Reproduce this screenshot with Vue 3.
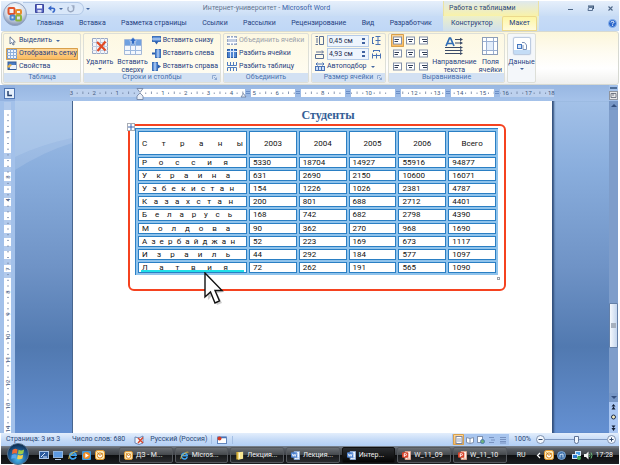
<script setup>
import { ref } from 'vue'

const tabs = ['Главная', 'Вставка', 'Разметка страницы', 'Ссылки', 'Рассылки', 'Рецензирование', 'Вид', 'Разработчик']
const years = ['2003', '2004', '2005', '2006', 'Всего']
const rows = [
  ['Россия', 5330, 18704, 14927, 55916, 94877],
  ['Украина', 631, 2690, 2150, 10600, 16071],
  ['Узбекистан', 154, 1226, 1026, 2381, 4787],
  ['Казахстан', 200, 801, 688, 2712, 4401],
  ['Беларусь', 168, 742, 682, 2798, 4390],
  ['Молдова', 90, 362, 270, 968, 1690],
  ['Азербайджан', 52, 223, 169, 673, 1117],
  ['Израиль', 44, 292, 184, 577, 1097],
  ['Латвия', 72, 262, 191, 565, 1090]
]
// Distributed text: every letter is a word, and one more gap follows the last.
const spread = (name) => name.split('').join(' ')
const trailing = (name) => Math.round(90 / name.length) + 3 + 'px'

const rowHeight = ref('0,45 см')
const colWidth = ref('4,93 см')
const zoom = ref(50)

const unit = 22.85
const hNumbers = [-3, -2, -1, 1, 2, 3, 4, 5, 6, 8, 10, 12, 13, 14, 15, 16, 17, 18]
const hMarks = [173, 223, 273, 323, 373, 422]
const hTicks = []
for (let i = -3; i < 18; i++) hTicks.push(i + 0.25, i + 0.5, i + 0.75)
const hx = (n) => 68 + n * unit

const vSegments = [[9, 43], [58, 8], [71, 9], [85, 7], [97, 8], [111, 8], [124, 8], [137, 8], [150, 8], [164, 7], [177, 400]]
const vNumbers = [[1, 31], [3, 76], [4, 99], [7, 168], [8, 191], [9, 213], [10, 236], [11, 259], [12, 282], [13, 305], [14, 328]]
const vTicks = []
for (let y = 14; y < 330; y += 5.7) vTicks.push(y)

const tasks = [
  { icon: 'i-mail', text: 'ДЗ - M...' },
  { icon: 'i-ie', text: 'Micros...' },
  { icon: 'i-folder', text: 'Лекция...' },
  { icon: 'i-word', text: 'Лекция...' },
  { icon: 'i-word', text: 'Интер...', active: true },
  { icon: 'i-ppt', text: 'W_11_09' },
  { icon: 'i-ppt', text: 'W_11_10' }
]
const aligns = [0, 1, 2, 3, 4, 5, 6, 7, 8]
</script>

<template>
  <div class="window">
    <svg class="defs" width="0" height="0" aria-hidden="true">
      <defs>
        <radialGradient id="orb" cx="50%" cy="30%" r="70%">
          <stop offset="0" stop-color="#fff" /><stop offset=".6" stop-color="#d5dce8" /><stop offset="1" stop-color="#7f8fae" />
        </radialGradient>
        <radialGradient id="start" cx="50%" cy="75%" r="75%">
          <stop offset="0" stop-color="#4cb8ea" /><stop offset=".55" stop-color="#1e5f9c" /><stop offset="1" stop-color="#0b2748" />
        </radialGradient>
        <symbol id="i-grid" viewBox="0 0 10 10">
          <rect x=".5" y=".5" width="9" height="9" fill="#eef4fc" stroke="#7f9cc8" />
          <path d="M0 3.5H10M0 6.5H10M3.5 0V10M6.5 0V10" stroke="#8fb0dc" />
        </symbol>
        <symbol id="i-mail" viewBox="0 0 10 10">
          <rect x=".5" y=".5" width="9" height="9" rx="2" fill="#fbe9b8" stroke="#e89a2a" />
          <circle cx="5" cy="5.5" r="2.6" fill="#fff" stroke="#d98417" /><path d="M2.5 2.5L5 5.5L7.5 3" fill="none" stroke="#c77812" />
        </symbol>
        <symbol id="i-ie" viewBox="0 0 10 10">
          <path d="M8 6.7A3.2 3.2 0 1 1 8.1 5.2H3" fill="none" stroke="#3fa2ec" stroke-width="1.7" />
          <path d="M.8 9Q0 6.5 4.5 3Q8.5 .2 9.4 1.4" fill="none" stroke="#f4c53c" stroke-width=".9" />
        </symbol>
        <symbol id="i-folder" viewBox="0 0 10 10">
          <path d="M1.5 1H5V9.5H1.5Z" fill="#d8b03a" /><path d="M3.5 1.5L9 .8V8.6L3.5 9.6Z" fill="#f8e691" /><path d="M5 2V8" stroke="#fffbe0" />
        </symbol>
        <symbol id="i-word" viewBox="0 0 10 10">
          <path d="M3.5 .5H9.5V9.5H3.5Z" fill="#f2f7ff" stroke="#8cabd8" /><path d="M5.5 7.5H8.5" stroke="#8cabd8" />
          <rect y="1.5" width="7" height="6" rx="1" fill="#4a80d0" /><path d="M1.3 3L2.4 6L3.5 3.6L4.6 6L5.7 3" fill="none" stroke="#fff" stroke-width=".9" />
        </symbol>
        <symbol id="i-ppt" viewBox="0 0 10 10">
          <path d="M3.5 .5H9.5V9.5H3.5Z" fill="#fff1ea" stroke="#e2a58c" /><path d="M5.5 8H8.5" stroke="#e2a58c" />
          <rect y="1.5" width="7" height="6" rx="1" fill="#d8432a" /><path d="M2.5 6.6V3H4A1 1 0 0 1 4 5H2.5" fill="none" stroke="#fff" />
        </symbol>
        <symbol id="i-launch" viewBox="0 0 5 5"><path d="M.5 4V.5H4M2 2L4.5 4.5M4.5 2.5V4.5H2.5" fill="none" stroke="#7d9bc8" stroke-width=".8" /></symbol>
      </defs>
    </svg>

    <header class="chrome">
      <button class="office" aria-label="Office">
        <svg viewBox="0 0 24 24">
          <circle cx="12" cy="12" r="11.5" fill="url(#orb)" stroke="#8fa3c4" />
          <g fill="none" stroke-width="2"><rect x="5.500" y="6" width="6" height="6" rx="1" stroke="#e0532a" /><rect x="13" y="8" width="5" height="4" rx="1" stroke="#e88a2a" /><rect x="13" y="13.500" width="5" height="5" rx="1" stroke="#8ab53c" /><rect x="7.500" y="13.500" width="4" height="4" rx="1" stroke="#4a86cf" /></g>
        </svg>
      </button>
      <div class="titlebar">
        <div class="quick">
          <button aria-label="Сохранить"><svg width="9" height="9" viewBox="0 0 9 9"><path d="M.5 .5H8.5V8.5H.5Z" fill="#5a68c4" stroke="#3d479c" /><rect x="2" y="1" width="5" height="3.5" fill="#f4f6ff" /><rect x="2.5" y="6" width="4" height="2.5" fill="#d5daf4" /></svg></button>
          <button aria-label="Отменить"><svg width="8" height="8" viewBox="0 0 8 8"><path d="M2 3.2H4.5Q7 3.2 6.4 5.5Q6 7 4.5 7.3" fill="none" stroke="#3767c8" stroke-width="1.6" /><path d="M0 3.2L3.3 .4V6Z" fill="#3767c8" /></svg></button>
          <i class="caret"></i>
          <button aria-label="Повторить"><svg width="8" height="8" viewBox="0 0 8 8"><path d="M1.6 2Q0 4 1.8 6Q4 7.5 6 5.8Q7.3 4 6 2" fill="none" stroke="#9aa8c0" stroke-width="1.4" /><path d="M4 .3H7.5V3.5Z" fill="#9aa8c0" /></svg></button>
        </div>
        <i class="caret more"></i>
        <h1>Интернет-университет - <span>Microsoft Word</span></h1>
        <div class="context">Работа с таблицами</div>
        <div class="controls">
          <button aria-label="Свернуть"><svg width="7" height="7" viewBox="0 0 7 7"><path d="M1 4.5H6" stroke="#4f6787" /></svg></button>
          <button aria-label="Восстановить"><svg width="7" height="7" viewBox="0 0 7 7"><path d="M1.5 2.5H5.5V5.5H1Z" fill="none" stroke="#5b7394" /><path d="M1 1.2H6.5V4" fill="none" stroke="#3f5878" stroke-width="1.2" /></svg></button>
          <button aria-label="Закрыть"><svg width="7" height="7" viewBox="0 0 7 7"><path d="M1.5 1.5L5.5 5.5M5.5 1.5L1.5 5.5" stroke="#4f6787" stroke-width="1.1" /></svg></button>
        </div>
      </div>
      <div class="tabbar">
        <nav class="tabs"><a v-for="t in tabs" :key="t" href="#">{{ t }}</a></nav>
        <nav class="tabs context-tabs"><a href="#">Конструктор</a><a href="#" class="active">Макет</a></nav>
        <div class="help"><button aria-label="Справка"><svg width="9" height="9" viewBox="0 0 9 9"><circle cx="4.5" cy="4.5" r="4" fill="#2b67cc" stroke="#8db4ea" /><path d="M3 3.5Q3.2 2.3 4.5 2.3Q6 2.4 5.9 3.4Q5.7 4.2 4.6 4.7V5.4M4.6 6.2V7" fill="none" stroke="#fff" /></svg></button></div>
      </div>
    </header>

    <section class="ribbon">
      <div class="group g-table">
        <div class="body stack">
          <button><svg width="10" height="10" viewBox="0 0 10 10"><path d="M3 .8V8L4.8 6.4L6 9L7.2 8.4L6.1 6H8.3Z" fill="#fff" stroke="#4a5f86" stroke-width=".8" /></svg>Выделить<i class="caret"></i></button>
          <button class="on"><svg width="10" height="10"><use href="#i-grid" /></svg>Отобразить сетку</button>
          <button><svg width="10" height="10" viewBox="0 0 10 10"><rect x="1" y="1" width="8" height="7.5" fill="#4a7cc4" stroke="#325a96" /><rect x="3" y="4" width="6" height="4" fill="#eef3fb" /><path d="M0 5.5L3 3L5 4L2 7Z" fill="#e9b44a" /></svg>Свойства</button>
        </div>
        <h2>Таблица</h2>
      </div>
      <div class="group g-rows">
        <div class="body">
          <button class="big"><svg width="18" height="18" viewBox="0 0 18 18"><path d="M1.5 1.5H16.500V16.500H1.500Z" fill="#f4f6fb" stroke="#9aa9c4" /><path d="M1 5.500H17M1 9.500H17M1 13.500H17M5.500 1V17M9.500 1V17M13.500 1V17" stroke="#c3cde0" /><path d="M6 5L14.500 13.500M14.500 4.500L6.500 14" stroke="#e04a26" stroke-width="2.200" /></svg><span>Удалить</span><i class="caret"></i></button>
          <button class="big"><svg width="18" height="18" viewBox="0 0 18 18"><path d="M.5 2.500H17.500V17.500H.5Z" fill="#f3f7fd" stroke="#a5b8d6" /><rect x="1" y="3" width="16" height="5" fill="#6fa0e0" /><path d="M0 8.500H18M0 13.500H18M6.500 3V17M11.500 3V17" stroke="#9cb8de" /><path d="M9 .5L12.500 4H10.500V7H7.500V4H5.500Z" fill="#2c68c4" stroke="#dfeafa" stroke-width=".5" /></svg><span>Вставить<br>сверху</span></button>
          <div class="stack">
            <button><svg width="9" height="9" viewBox="0 0 9 9"><rect x=".5" y=".5" width="8" height="5" fill="#5f92da" stroke="#3e70b8" /><path d="M0 3H9" stroke="#d5e4f8" /><path d="M2.500 5.500H6.500L4.500 8.500Z" fill="#2c5fae" /></svg>Вставить снизу</button>
            <button><svg width="9" height="9" viewBox="0 0 9 9"><rect x="3.500" y=".5" width="5" height="8" fill="#5f92da" stroke="#3e70b8" /><path d="M6 0V9" stroke="#d5e4f8" /><path d="M0 4.500H3" stroke="#2c5fae" stroke-width="2" /></svg>Вставить слева</button>
            <button><svg width="9" height="9" viewBox="0 0 9 9"><rect x=".5" y=".5" width="5" height="8" fill="#5f92da" stroke="#3e70b8" /><path d="M3 0V9" stroke="#d5e4f8" /><path d="M6 2.500L9 4.500L6 6.500Z" fill="#2c5fae" /></svg>Вставить справа</button>
          </div>
        </div>
        <h2>Строки и столбцы<svg class="launch"><use href="#i-launch" /></svg></h2>
      </div>
      <div class="group g-merge">
        <div class="body stack">
          <button class="off"><svg width="10" height="9" viewBox="0 0 10 9"><rect x=".5" y=".5" width="9" height="8" fill="#c4cfe2" stroke="#98a8c4" /><path d="M0 2.500H10M3.500 0V3M6.500 0V3M0 6.500H10M3.500 6V9M6.500 6V9" stroke="#fff" /></svg>Объединить ячейки</button>
          <button><svg width="10" height="9" viewBox="0 0 10 9"><rect x=".5" y=".5" width="9" height="8" fill="#4f84d0" stroke="#2f5fa8" /><path d="M0 2.500H10M3.500 0V9M6.500 0V9" stroke="#dce8fa" /></svg>Разбить ячейки</button>
          <button><svg width="10" height="9" viewBox="0 0 10 9"><path d="M.5 0V3.500H9.500V0M.5 9V5.500H9.500V9M3.500 0V3M6.500 0V3M3.500 6V9M6.500 6V9" fill="none" stroke="#4f7cc0" /></svg>Разбить таблицу</button>
        </div>
        <h2>Объединить</h2>
      </div>
      <div class="group g-size">
        <div class="body stack">
          <div class="field">
            <svg width="9" height="9" viewBox="0 0 9 9"><path d="M.5 .5H3M.5 8.500H3M4.500 .5H8.500V8.500H4.500ZM2 2V7" fill="none" stroke="#5a6f94" /></svg>
            <span class="spin"><input v-model="rowHeight" aria-label="Высота строки"><i class="steps"></i></span>
            <svg width="9" height="9" viewBox="0 0 9 9"><path d="M.5 1V8M3.500 .5H8.500M3.500 4.500H8.500M3.500 8.500H8.500M6 0V9M0 1.500H2M0 7.500H2" fill="none" stroke="#4a72b4" /></svg>
          </div>
          <div class="field">
            <svg width="9" height="9" viewBox="0 0 9 9"><path d="M.5 4.500H8.500V8.500H.5ZM1 2H8M7 .5L8.500 2L7 3.500" fill="none" stroke="#5a6f94" /></svg>
            <span class="spin"><input v-model="colWidth" aria-label="Ширина столбца"><i class="steps"></i></span>
            <svg width="9" height="9" viewBox="0 0 9 9"><path d="M1 .5H8M.5 3.500V8.500M4.500 3.500V8.500M8.500 3.500V8.500M0 5.500H9M1.500 0V2M7.500 0V2" fill="none" stroke="#4a72b4" /></svg>
          </div>
          <button class="fit"><svg width="10" height="9" viewBox="0 0 10 9"><rect x=".5" y="4.500" width="9" height="4" fill="#cfe0f8" stroke="#4a72b4" /><path d="M3.500 4V9M6.500 4V9M1 2H9M2.500 .5L1 2L2.500 3.500M7.500 .5L9 2L7.500 3.500" fill="none" stroke="#4a72b4" /></svg>Автоподбор<i class="caret"></i></button>
        </div>
        <h2>Размер ячейки<svg class="launch"><use href="#i-launch" /></svg></h2>
      </div>
      <div class="group g-align">
        <div class="body">
          <div class="aligns">
            <button v-for="a in aligns" :key="a" :class="{ on: a === 0 }" :aria-label="'Выравнивание ' + (a + 1)">
              <svg width="9" height="9" viewBox="0 0 9 9"><rect x=".5" y="1" width="8" height="7" fill="#fff" stroke="#8492ab" /><path :d="a % 3 === 2 ? 'M3 3.500H8M4 5.500H8' : a % 3 === 1 ? 'M2 3.500H7M3 5.500H6' : 'M1.500 3.500H6M1.500 5.500H5'" stroke="#333f58" /></svg>
            </button>
          </div>
          <button class="big"><svg width="20" height="18" viewBox="0 0 20 18"><path d="M2 9L5.500 1H6.500L10 9M3.500 6.500H8.500" fill="none" stroke="#2f6cb5" stroke-width="1.700" /><path d="M11 2.500H17M11 6H17M1 10.500H17M1 13.500H17M1 16.500H17" stroke="#3b4b68" /><path d="M16 .8L19 2.500L16 4.200ZM16 4.300L19 6L16 7.700ZM16 9L19 10.500L16 12ZM16 12L19 13.500L16 15ZM16 15L19 16.500L16 18Z" fill="#3b4b68" /></svg><span>Направление<br>текста</span></button>
          <button class="big"><svg width="16" height="18" viewBox="0 0 16 18"><rect x=".5" y=".5" width="15" height="17" fill="#fff" stroke="#8c9db8" /><path d="M4.500 1V17M11.500 1V17M1 4.500H15M1 13.500H15" stroke="#9bb0d2" /><rect x="5" y="5" width="6" height="8" fill="#e4eefb" /></svg><span>Поля<br>ячейки</span></button>
        </div>
        <h2>Выравнивание</h2>
      </div>
      <div class="group g-data">
        <button class="big data"><span class="tile"><svg width="10" height="8" viewBox="0 0 10 8"><rect x=".5" y="2.500" width="4" height="4" fill="#d5e4f8" stroke="#4477c0" /><path d="M5 .5H7.500L9.500 3V7.500H6V3" fill="#fff" stroke="#7d93b8" /></svg></span><span>Данные</span><i class="caret"></i></button>
      </div>
    </section>

    <main class="work">
      <div class="corner"><button aria-label="Табуляция"><svg width="9" height="9" viewBox="0 0 9 9"><path d="M3 2V6.500H7" fill="none" stroke="#26406e" stroke-width="1.500" /></svg></button></div>
      <div class="ruler-row">
        <svg class="hruler" width="480" height="16" viewBox="0 0 480 16">
          <rect x="-2" y="4" width="70" height="8" fill="#bdd1ee" /><rect x="67" y="4" width="362" height="8" fill="#fff" /><rect x="422" y="4" width="60" height="8" fill="#bdd1ee" />
          <path v-for="t in hTicks" :key="t" :d="`M${hx(t)} ${t % 1 === 0.5 || t % 1 === -0.5 ? 6.500 : 7.500}V9`" stroke="#6d7f9e" stroke-width=".8" />
          <text v-for="n in hNumbers" :key="n" :x="hx(n)" y="10">{{ Math.abs(n) }}</text>
          <g v-for="m in hMarks" :key="m"><rect :x="m" y="4" width="6" height="8" fill="#9dbbe6" /><path :d="`M${m + 1} 6.500H${m + 5}M${m + 1} 8.500H${m + 5}`" stroke="#6c8fc6" /></g>
          <path d="M65 3.500H71L68 7.500ZM68 8L71 11V14.500H65V11Z" fill="#e8eef8" stroke="#6b7c9c" stroke-width=".8" />
          <path d="M169 12L171.500 8.500L174 12Z" fill="#e8eef8" stroke="#6b7c9c" stroke-width=".8" />
        </svg>
      </div>
      <div class="ruler-end"><svg width="9" height="16" viewBox="0 0 9 16"><path d="M1 3H8" stroke="#32527e" stroke-width="1.500" /><rect x=".5" y="6.500" width="8" height="8" fill="#e6e6e8" stroke="#8f949e" /><path d="M2 8.500H7V12.500H2ZM4 8V11" fill="none" stroke="#5c6372" stroke-width=".8" /></svg></div>

      <div class="vruler">
        <svg width="15" height="332" viewBox="0 0 15 332">
          <rect x="4" y="1" width="7" height="331" fill="#b2caec" />
          <rect v-for="s in vSegments" :key="s[0]" x="4" :y="s[0]" width="7" :height="s[1]" fill="#fff" />
          <path v-for="t in vTicks" :key="t" :d="`M7 ${t}H9`" stroke="#7b8ba8" stroke-width=".8" />
          <text v-for="n in vNumbers" :key="n[0]" :transform="`translate(9.500 ${n[1]}) rotate(-90)`">{{ n[0] }}</text>
        </svg>
      </div>
      <div class="desk">
        <svg class="wave" viewBox="0 0 57 60" preserveAspectRatio="none"><path d="M0 0H57V37Q25 44 0 56Z" fill="#d2e3f6" opacity=".35" /><path d="M0 56Q25 44 57 37V42Q28 51 0 69Z" fill="#d2e3f6" opacity=".2" /></svg>
      </div>
      <article class="page">
        <h2>Студенты</h2>
        <div class="highlight">
          <svg class="move" width="8" height="8" viewBox="0 0 8 8"><rect x=".5" y=".5" width="7" height="7" fill="#fff" stroke="#a9adb5" /><path d="M4 1V7M1 4H7" stroke="#3f66b0" /></svg>
          <table>
            <thead>
              <tr><th class="name">С т р а н ы</th><th v-for="y in years" :key="y">{{ y }}</th></tr>
            </thead>
            <tbody>
              <tr v-for="(r, i) in rows" :key="r[0]">
                <td class="name" :class="{ marked: i === rows.length - 1 }" :style="{ paddingRight: trailing(r[0]) }">{{ spread(r[0]) }}</td>
                <td v-for="(v, j) in r.slice(1)" :key="j">{{ v }}</td>
              </tr>
            </tbody>
          </table>
          <i class="resize"></i>
          <svg class="pointer" width="20" height="34" viewBox="0 0 20 34"><path d="M3 4L4 28L9 23L13 33L18 31L13 21L20 20Z" fill="#000" opacity=".2" /><path d="M1 1V25L6.500 20L11 31L15.500 29L11 18.500H18Z" fill="#fff" stroke="#111" stroke-width="1.400" /></svg>
        </div>
      </article>
      <div class="desk right"></div>
      <div class="scroll">
        <button class="arrow up" aria-label="Вверх"></button>
        <div class="before"></div>
        <div class="thumb"></div>
        <div class="after"></div>
        <button class="arrow down" aria-label="Вниз"></button>
        <div class="browse">
          <button aria-label="Предыдущая страница"><svg width="7" height="6" viewBox="0 0 7 6"><path d="M3.500 0L5.500 2.500H1.500ZM3.500 2.500L5.500 5.500H1.500Z" fill="#111d33" /></svg></button>
          <button aria-label="Выбор объекта"><svg width="7" height="6" viewBox="0 0 7 6"><circle cx="3.500" cy="3" r="2" fill="#f4ecc0" stroke="#1c2b48" /></svg></button>
          <button aria-label="Следующая страница"><svg width="7" height="6" viewBox="0 0 7 6"><path d="M3.500 3L5.500 .5H1.500ZM3.500 6L5.500 3H1.500Z" fill="#111d33" /></svg></button>
        </div>
      </div>
    </main>

    <footer class="status">
      <span class="pages">Страница: 3 из 3</span>
      <span class="words">Число слов: 680</span>
      <svg width="11" height="10" viewBox="0 0 11 10"><path d="M1 2L5 3L9 1V8L5 9.500L1 8Z" fill="#f2f5fb" stroke="#6d86b3" /><path d="M4 3L9 8M9 2.500L4 8" stroke="#d8432a" stroke-width="1.400" /></svg>
      <span class="lang">Русский (Россия)</span>
      <span class="macro"><svg width="10" height="8" viewBox="0 0 10 8"><rect x=".5" y="1" width="9" height="6.500" fill="#fff" stroke="#6386bd" /><path d="M1 1.500H9" stroke="#4a73b6" stroke-width="1.500" /><circle cx="2.500" cy="2.500" r="2" fill="#d43b25" /></svg></span>
      <span class="views">
        <button class="on" aria-label="Разметка"><svg width="8" height="8" viewBox="0 0 8 8"><rect x="1" y=".5" width="6" height="7" fill="#fff" stroke="#7d86a0" /><path d="M2 3H6M2 5H6" stroke="#9aa3b8" /></svg></button>
        <button aria-label="Чтение"><svg width="8" height="8" viewBox="0 0 8 8"><path d="M.5 1.500L4 2.500L7.500 1.500V6.500L4 7.500L.5 6.500ZM4 2.500V7" fill="#fff" stroke="#7f90ae" /></svg></button>
        <button aria-label="Веб"><svg width="8" height="8" viewBox="0 0 8 8"><rect x=".5" y=".5" width="5" height="6" fill="#fff" stroke="#7f90ae" /><circle cx="5.500" cy="5.500" r="2" fill="#6fb07c" stroke="#3e6fae" stroke-width=".8" /></svg></button>
        <button aria-label="Структура"><svg width="8" height="8" viewBox="0 0 8 8"><path d="M1 1.500H6M3 4H7M1 6.500H6" stroke="#7892c0" /></svg></button>
        <button aria-label="Черновик"><svg width="8" height="8" viewBox="0 0 8 8"><path d="M1 1.500H7M1 3.500H7M1 5.500H7M1 7H7" stroke="#7892c0" /></svg></button>
      </span>
      <span class="percent">100%</span>
      <button class="round" aria-label="Уменьшить"><svg width="9" height="9" viewBox="0 0 9 9"><circle cx="4.500" cy="4.500" r="4" fill="#f4f8fe" stroke="#7f90ae" /><path d="M2.500 4.500H6.500" stroke="#2d4468" /></svg></button>
      <input v-model="zoom" type="range" min="0" max="100" aria-label="Масштаб">
      <button class="round" aria-label="Увеличить"><svg width="9" height="9" viewBox="0 0 9 9"><circle cx="4.500" cy="4.500" r="4" fill="#f4f8fe" stroke="#7f90ae" /><path d="M2.500 4.500H6.500M4.500 2.500V6.500" stroke="#2d4468" /></svg></button>
    </footer>

    <footer class="taskbar">
      <button class="start" aria-label="Пуск"><svg viewBox="0 0 24 24"><circle cx="12" cy="12" r="11.500" fill="url(#start)" stroke="#5a7690" /><path d="M6 7.500Q9 5.500 11.500 7L10.800 11.500Q8 10.500 5.400 12Z" fill="#ef6a34" /><path d="M12.600 7.400Q15.500 9 18.600 7.200L17.800 11.500Q15 13 12 11.700Z" fill="#9ccc4a" /><path d="M5.200 13Q8 11.600 10.600 12.700L9.900 17Q7.500 16 4.600 17.300Z" fill="#58a6ee" /><path d="M11.800 12.900Q14.500 14.300 17.600 12.700L16.800 17Q14 18.600 11.100 17.200Z" fill="#f8d24a" /></svg></button>
      <div class="launchers">
        <button aria-label="Рабочий стол"><svg width="10" height="9" viewBox="0 0 10 9"><rect x=".5" y=".5" width="9" height="7" fill="#2d5b9e" stroke="#a9c4e8" /><path d="M2 6L6 2M4 6H8" stroke="#dceafc" /></svg></button>
        <button aria-label="Окна"><svg width="10" height="9" viewBox="0 0 10 9"><rect x=".5" y=".5" width="9" height="6" fill="#5d9ae2" stroke="#8fb4e0" /><path d="M2 8.500H8" stroke="#b5c9e2" /></svg></button>
        <button aria-label="Internet Explorer"><svg width="10" height="10"><use href="#i-ie" /></svg></button>
        <button aria-label="Проигрыватель"><svg width="9" height="9" viewBox="0 0 9 9"><rect width="9" height="9" rx="1" fill="#3f98dc" /><circle cx="4.500" cy="4.500" r="3.600" fill="#ef8a22" /><path d="M3.300 2.300V6.700L6.800 4.500Z" fill="#fff" /></svg></button>
        <button aria-label="Почта"><svg width="10" height="10"><use href="#i-mail" /></svg></button>
      </div>
      <div class="tasks">
        <button v-for="(t, i) in tasks" :key="i" :class="{ active: t.active }"><svg width="9" height="9"><use :href="'#' + t.icon" /></svg>{{ t.text }}</button>
      </div>
      <span class="ru">RU</span>
      <div class="tray">
        <svg width="5" height="7" viewBox="0 0 5 7"><path d="M4 1L1.500 3.500L4 6" fill="none" stroke="#fff" stroke-width="1.200" /></svg>
        <svg width="10" height="10"><use href="#i-mail" /></svg>
        <svg width="9" height="9" viewBox="0 0 9 9"><circle cx="4.500" cy="4.500" r="4" fill="#3c6ea8" stroke="#7ea8d4" /><path d="M3 6.500V3.500L6 3V6.500" fill="none" stroke="#cfe2f6" /></svg>
        <svg class="net" width="9" height="9" viewBox="0 0 9 9"><rect x="3.500" y=".5" width="5" height="4" fill="#4aa0e8" stroke="#d5e6f6" /><rect x=".5" y="3.500" width="5" height="4" fill="#2d7cd0" stroke="#d5e6f6" /><circle cx="7" cy="7" r="2" fill="#45a85a" /></svg>
        <svg width="9" height="9" viewBox="0 0 9 9"><path d="M0 3H2L4.500 .5V8.500L2 6H0Z" fill="#f2f2f2" /><path d="M5.500 3Q6.500 4.500 5.500 6M7 1.500Q9 4.500 7 7.500" fill="none" stroke="#69b978" /></svg>
      </div>
      <time>17:28</time>
    </footer>
  </div>
</template>

<style>
body { margin: 0; background: #fff; }
</style>

<style scoped>
.window { display: flex; flex-direction: column; min-height: 100vh; box-sizing: border-box; padding: 1px 1px 0; font: 7px/9px Roboto, "Open Sans", sans-serif; color: #1f4080; }
.defs { position: absolute; }
svg { display: block; flex: none; }
button { font: inherit; color: inherit; background: none; border: 0; padding: 0; margin: 0; display: flex; align-items: center; white-space: nowrap; }
h1, h2 { margin: 0; font: inherit; }
a { color: inherit; text-decoration: none; white-space: nowrap; }
.caret { width: 0; height: 0; border: 2px solid transparent; border-top: 2px solid #4467a0; border-bottom: 0; flex: none; }

.chrome { position: relative; background: linear-gradient(#dfeafa, #c8dcf6 40%, #bfd7f6); }
.office { position: absolute; left: 2px; top: 1px; z-index: 2; }
.office svg { width: 24px; height: 24px; }
.titlebar { display: flex; height: 15px; align-items: stretch; background: linear-gradient(#e6effb, #c9ddf5); }
.quick { margin: 1px 0 1px 22px; padding: 0 8px 0 12px; width: 40px; display: flex; align-items: center; justify-content: space-between; border: 1px solid #b2c8e6; border-left: 0; border-radius: 0 8px 8px 0; background: #d9e7f9; box-sizing: content-box; }
.more { align-self: center; margin-left: 2px; }
.titlebar h1 { flex: 1; align-self: center; text-align: center; color: #64758f; font-size: 7px; }
.titlebar h1 span { color: #3a62a8; }
.context { width: 96px; box-sizing: border-box; padding: 3px 0 0 5px; border: 1px solid #ebe2a4; border-width: 0 1px; background: linear-gradient(#dfe9ee, #f9f2a8); color: #2a467a; white-space: nowrap; }
.controls { width: 80px; box-sizing: border-box; display: flex; justify-content: space-between; align-items: center; padding: 0 5px 0 28px; }
.tabbar { display: flex; height: 15px; }
.tabs { flex: 1; display: flex; justify-content: space-between; align-items: center; padding: 0 11px 0 36px; }
.context-tabs { flex: none; width: 96px; box-sizing: border-box; padding: 0 2px 0 8px; align-items: stretch; background: linear-gradient(#eef0c8, #cfe0ee); }
.context-tabs a { line-height: 15px; }
.active { padding: 0 7px; }
.context-tabs .active { background: linear-gradient(#fdf6a0, #fffbe0); border-radius: 2px 2px 0 0; box-shadow: inset 0 0 0 1px #ecd98c; }
.help { width: 80px; display: flex; align-items: center; justify-content: flex-end; padding-right: 2px; box-sizing: border-box; }

.ribbon { display: flex; gap: 2px; height: 54px; padding: 1px; box-sizing: border-box; background: linear-gradient(#fcf6da, #fefcf2 40%, #fff 70%, #f0f0ee); border: 1px solid #d6d9d2; border-radius: 3px; }
.group { display: flex; flex-direction: column; box-sizing: border-box; border: 1px solid #dddfd8; border-radius: 2px; background: linear-gradient(#fdf8e2, #fffdf4); overflow: hidden; }
.g-table { width: 78px; } .g-rows { width: 138px; } .g-merge { width: 86px; } .g-size { width: 75px; } .g-align { width: 117px; } .g-data { width: 29px; }
.group h2 { position: relative; height: 9px; line-height: 9px; text-align: center; color: #4670ae; background: #d3e1f3; }
.launch { position: absolute; right: 3px; top: 2px; width: 5px; height: 5px; }
.body { flex: 1; display: flex; min-height: 0; }
.stack { display: flex; flex-direction: column; justify-content: space-evenly; align-items: stretch; }
.stack button { gap: 2px; height: 12px; }
.body.stack { padding: 0 3px; }
.stack .caret { margin-left: 2px; }
.on { background: linear-gradient(#fdd9a0, #fbb95a); box-shadow: inset 0 0 0 1px #d8a04c; border-radius: 1px; }
.stack .on { padding: 0 1px; margin: 0 -1px; }
.off { color: #9aa0aa; }
.big { flex-direction: column; justify-content: flex-start; padding-top: 3px; line-height: 8px; text-align: center; }
.big svg { margin-bottom: 3px; }
.big .caret { margin-top: 2px; }
.g-rows .body { justify-content: space-between; padding: 0 2px; }
.field { display: flex; gap: 3px; align-items: center; height: 13px; }
.spin { display: flex; width: 42px; height: 12px; box-sizing: border-box; align-items: center; border: 1px solid #b5cbe8; background: #eef5fd; }
.spin input { width: 34px; border: 0; padding: 0 0 0 1px; background: none; font: inherit; color: #1c2c4c; outline: 0; box-sizing: border-box; height: 10px; }
.steps { width: 3px; height: 6px; background: linear-gradient(#3f62a0 2px, transparent 2px 4px, #3f62a0 4px); }
.g-align .body { justify-content: space-between; padding: 0 2px; }
.aligns { display: grid; grid-template-columns: repeat(3, 13px); align-content: space-evenly; }
.aligns button { height: 13px; justify-content: center; }
.g-data { background: #f4f7fa; }
.data { align-items: center; }
.tile { display: flex; align-items: center; justify-content: center; width: 18px; height: 18px; margin-bottom: 3px; border: 1px solid #bccbe0; border-radius: 2px; background: linear-gradient(#fff 12px, #c3dcf6 12px); box-sizing: border-box; box-shadow: 0 0 1px #9db3d0; }
.tile svg { margin: 0; }

.work { flex: 1; display: grid; grid-template-columns: 15px 1fr minmax(0, 480px) 1fr 9px; grid-template-rows: 16px 1fr; margin: 0 1px 0 -1px; background: #a3c1ea; }
.corner { display: flex; justify-content: flex-end; align-items: center; background: #93b2e0; }
.corner button { border: 1px solid #4f76b4; background: #e6f0fc; width: 11px; height: 11px; justify-content: center; }
.ruler-row { grid-column: 2 / 5; display: flex; justify-content: center; background: linear-gradient(#98b7e2, #a5c2ea); }
.hruler { overflow: visible; }
.hruler text, .vruler text { font: 6px Roboto, sans-serif; fill: #44597e; text-anchor: middle; }
.ruler-end { background: #a3c1ea; }
.vruler { background: #a3c1ea; overflow: hidden; }
.desk { background: linear-gradient(#a3c1e8, #8aaedd 20%, #6f93c6 50%, #5179b0 74%, #6490d2); }
.desk.right { box-shadow: inset 3px 0 2px -1px #33507c; }
.wave { width: 100%; height: 60px; overflow: visible; }
.page { background: #fff; border-left: 1px solid #47658f; box-sizing: border-box; padding: 8px 46px 0 55px; }
.page h2 { font: bold 12px/13px "Liberation Serif", serif; color: #345e96; text-align: center; padding: 0 0 2px 22px; }
.highlight { position: relative; border: 2px solid #f5421f; border-radius: 6px; padding: 2px 6px 14px 5px; }
.move { position: absolute; left: -3px; top: -3px; }
.resize { position: absolute; right: 4px; bottom: 9px; width: 3px; height: 3px; border: 1px solid #9aa0a8; background: #fff; box-sizing: border-box; }
.pointer { position: absolute; left: 74px; bottom: -17px; }
table { width: 100%; height: 147px; table-layout: fixed; border-collapse: separate; border-spacing: 2px; background: #8fc3ec; border: 1px solid #2b82c8; border-width: 1px 0 0 1px; color: #111; font: 8px/9px Roboto, "Open Sans", sans-serif; }
th, td { box-sizing: border-box; background: #fff; border: 1px solid #2a7fc4; padding: 0 0 0 3px; height: 11px; text-align: left; font-weight: 400; white-space: nowrap; }
th { height: 24px; text-align: center; padding: 0; }
.name { width: 109px; text-align: justify; text-align-last: justify; padding: 0 3px; }
.marked { background: #fff linear-gradient(#20dfe8, #20dfe8) center bottom / 103px 2px no-repeat; }

.scroll { display: flex; flex-direction: column; align-items: stretch; background: #7e9dca; }
.arrow { height: 9px; background: #7797c6; justify-content: center; }
.arrow::before { content: ""; border: 3px solid transparent; border-top: 0; border-bottom: 3px solid #34507f; }
.down::before { border-bottom: 0; border-top: 3px solid #34507f; }
.before { flex: 195; } .after { flex: 45; }
.thumb { flex: 44; border: 1px solid #6480a8; border-radius: 1px; background: linear-gradient(#a6b0be, #a6b0be) center / 5px 5px no-repeat, linear-gradient(90deg, #f4f8fd, #c4d6ee); box-sizing: border-box; }
.browse { background: #a9c6f2; display: flex; flex-direction: column; justify-content: space-around; align-items: center; height: 31px; }

.status { display: flex; align-items: center; height: 13px; padding: 0 3px 0 5px; background: linear-gradient(#e3eefc, #c6dbf7 50%, #b2cff5); color: #2a4776; white-space: nowrap; }
.words { margin: 0 9px 0 12px; }
.lang { margin-left: 5px; padding-right: 4px; border-right: 1px solid #a4bfe4; }
.macro { padding: 0 5px; border-right: 1px solid #a4bfe4; }
.views { margin-left: auto; display: flex; padding: 0 1px; background: #a9c6ef; }
.views button { width: 11px; height: 11px; justify-content: center; }
.percent { margin: 0 5px; }
.status input { appearance: none; width: 62px; height: 9px; margin: 0; background: linear-gradient(#7f99c2, #7f99c2) center / 100% 1px no-repeat; }
.status input::-webkit-slider-thumb { appearance: none; width: 5px; height: 8px; background: #f2f7fe; border: 1px solid #5f7396; border-radius: 0 0 3px 3px; }

.taskbar { position: relative; display: flex; align-items: center; height: 18px; margin-bottom: 1px; background: linear-gradient(#7d8590, #565b62 3px, #3b3f44 50%, #0c0d0f 51%, #1c1e21); color: #f2f2f2; padding-right: 6px; }
.start { position: absolute; left: 5px; top: -3px; }
.start svg { width: 24px; height: 22px; }
.launchers { display: flex; justify-content: space-between; width: 66px; margin-left: 38px; align-items: center; }
.tasks { flex: 1; display: flex; gap: 2px; margin-left: 14px; }
.tasks button { flex: 1 1 0; min-width: 0; height: 16px; gap: 3px; padding: 0 4px; box-sizing: border-box; border: 1px solid #55595e; border-radius: 2px; background: linear-gradient(#6a6e73, #44484c 50%, #17191b 51%, #2a2c2f); overflow: hidden; }
.tasks .active { background: linear-gradient(#2b2d30, #050505); border-color: #111; }
.ru { margin: 0 10px; }
.tray { display: flex; align-items: center; gap: 3px; margin-right: 3px; }
.net { margin-left: 3px; }
</style>
